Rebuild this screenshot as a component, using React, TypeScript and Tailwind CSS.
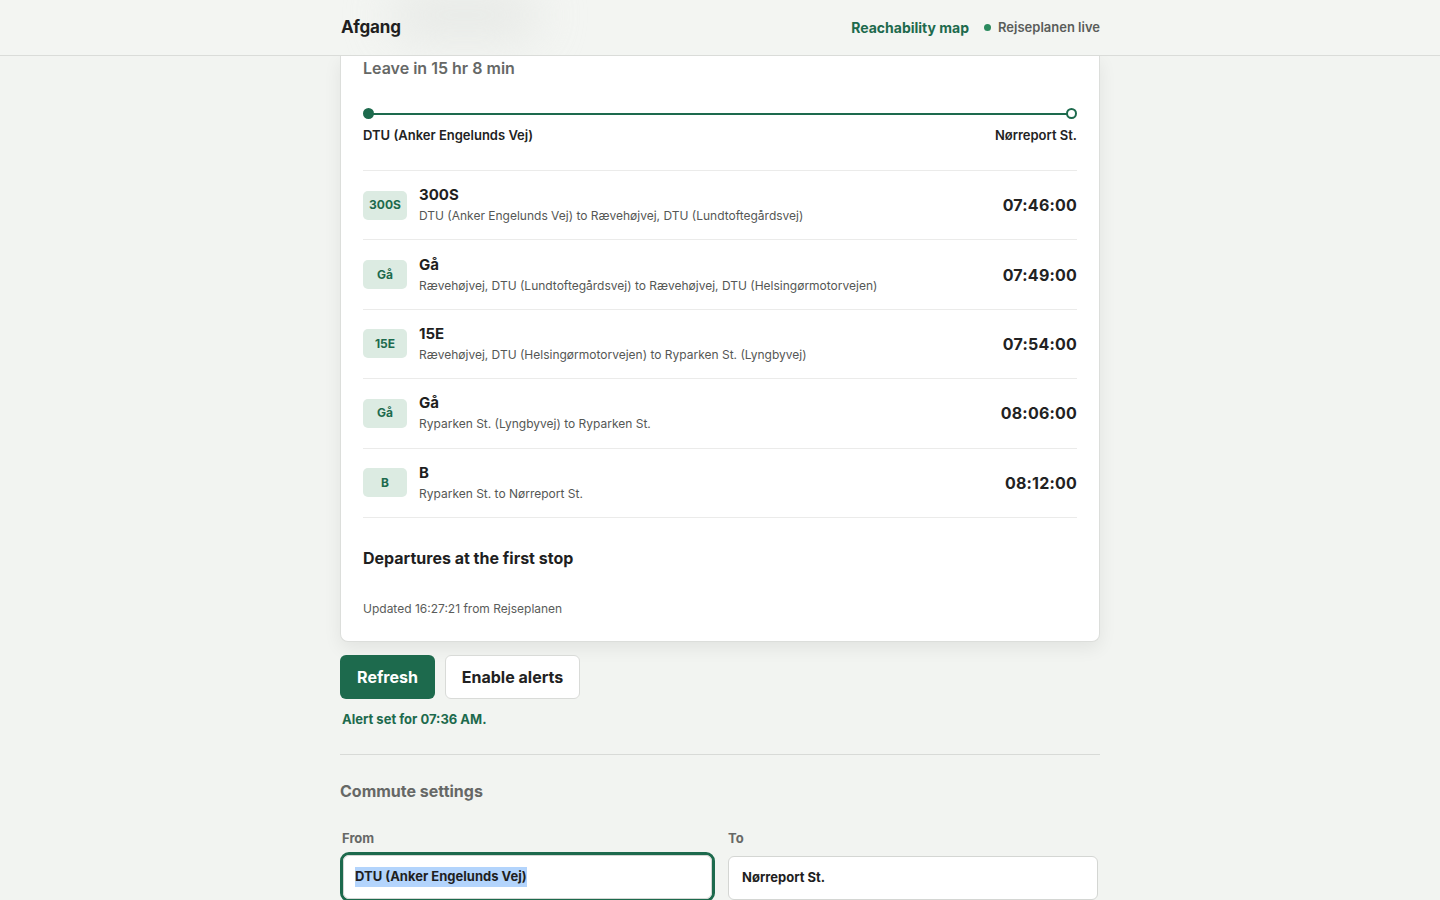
import React from "react";

const GREEN = "#1d6a4d";

const legs = [
  { badge: "300S", title: "300S", sub: "DTU (Anker Engelunds Vej) to Rævehøjvej, DTU (Lundtoftegårdsvej)", time: "07:46:00" },
  { badge: "Gå", title: "Gå", sub: "Rævehøjvej, DTU (Lundtoftegårdsvej) to Rævehøjvej, DTU (Helsingørmotorvejen)", time: "07:49:00" },
  { badge: "15E", title: "15E", sub: "Rævehøjvej, DTU (Helsingørmotorvejen) to Ryparken St. (Lyngbyvej)", time: "07:54:00" },
  { badge: "Gå", title: "Gå", sub: "Ryparken St. (Lyngbyvej) to Ryparken St.", time: "08:06:00" },
  { badge: "B", title: "B", sub: "Ryparken St. to Nørreport St.", time: "08:12:00" },
];

export default function App() {
  return (
    <div
      className="min-h-[900px] bg-[#f2f4f1] text-[#1f1f1f]"
      style={{ fontFamily: "Inter, 'Noto Sans', sans-serif" }}
    >
      <header className="relative h-[56px] border-b border-[#dadcd9] bg-[#f3f5f2] overflow-hidden">
        <div className="absolute left-[390px] top-[-10px] h-[50px] w-[150px] rounded-full bg-[#e2e4e1] blur-xl opacity-70" />
        <div className="relative mx-auto flex h-[55px] w-[760px] items-center justify-between">
          <div className="pl-[1px] text-[17px] font-bold tracking-[-0.2px] text-[#1f1f1f]">Afgang</div>
          <div className="flex items-center">
            <span className="text-[14px] font-bold text-[#1d6a4d]">Reachability map</span>
            <span className="ml-[15px] h-[7px] w-[7px] rounded-full bg-[#2a8a5e]" />
            <span className="ml-[7px] text-[13px] font-semibold text-[#5a5d5a]">Rejseplanen live</span>
          </div>
        </div>
      </header>

      <main className="mx-auto w-[760px]">
        <section className="rounded-b-[8px] border-x border-b border-[#dcdedb] bg-white px-[22px] pb-[23px] shadow-[0_6px_18px_rgba(0,0,0,0.07)]">
          <div className="text-[16px] font-semibold leading-[24px] text-[#666866]">Leave in 15 hr 8 min</div>

          <div className="relative mt-[28px] h-[11px]">
            <div className="absolute left-[5px] right-[5px] top-[4.5px] h-[2px]" style={{ background: GREEN }} />
            <div className="absolute left-0 top-0 h-[11px] w-[11px] rounded-full" style={{ background: GREEN }} />
            <div className="absolute right-0 top-0 h-[11px] w-[11px] rounded-full border-[2.5px] bg-white" style={{ borderColor: GREEN }} />
          </div>
          <div className="mt-[7px] flex justify-between text-[13px] font-semibold leading-[18px] text-[#222]">
            <span>DTU (Anker Engelunds Vej)</span>
            <span>Nørreport St.</span>
          </div>

          <div className="mt-[26px] border-t border-[#ebebea]">
            {legs.map((l, i) => (
              <div key={i} className="flex h-[69.4px] items-center border-b border-[#ebebea]">
                <div className="flex h-[29px] w-[44px] shrink-0 items-center justify-center rounded-[5px] bg-[#dcebe2] text-[12px] font-bold text-[#1d6a4d]">
                  {l.badge}
                </div>
                <div className="ml-[12px] flex-1">
                  <div className="text-[15px] font-bold leading-[20px] text-[#1f1f1f]">{l.title}</div>
                  <div className="mt-[2px] text-[12px] leading-[18px] text-[#555755]">{l.sub}</div>
                </div>
                <div className="text-[16px] font-bold tracking-[0.2px] text-[#222]">{l.time}</div>
              </div>
            ))}
          </div>

          <div className="mt-[28px] text-[16px] font-bold leading-[24px] text-[#1f1f1f]">Departures at the first stop</div>
          <div className="mt-[30px] text-[12px] leading-[18px] text-[#5a5c5a]">Updated 16:27:21 from Rejseplanen</div>
        </section>

        <div className="mt-[13px] flex gap-[10px]">
          <button className="h-[44px] w-[95px] rounded-[6px] text-[16px] font-bold text-white" style={{ background: GREEN }}>
            Refresh
          </button>
          <button className="h-[44px] w-[135px] rounded-[6px] border border-[#d9dbd8] bg-white text-[16px] font-bold text-[#222]">
            Enable alerts
          </button>
        </div>
        <div className="mt-[11px] pl-[2px] text-[13px] font-bold leading-[18px] text-[#1d6a4d]">Alert set for 07:36 AM.</div>

        <div className="mt-[26px] border-t border-[#d8dad7]" />

        <div className="mt-[24px] text-[16px] font-bold leading-[24px] text-[#666866]">Commute settings</div>

        <div className="mt-[26px] grid grid-cols-[375px_1fr] gap-x-[13px]">
          <div>
            <div className="pl-[2px] text-[13px] font-bold leading-[18px] text-[#666866]">From</div>
            <div className="mt-[5px] rounded-[9px] border-[3px] p-0" style={{ borderColor: GREEN }}>
              <div className="flex h-[44px] items-center rounded-[6px] border border-[#d4d6d3] bg-white px-[11px]">
                <span className="bg-[#b3d4fc] text-[13px] font-bold text-[#1f1f1f]">DTU (Anker Engelunds Vej)</span>
              </div>
            </div>
          </div>
          <div>
            <div className="text-[13px] font-bold leading-[18px] text-[#666866]">To</div>
            <div className="mt-[9px] flex h-[44px] w-[370px] items-center rounded-[6px] border border-[#d4d6d3] bg-white px-[13px]">
              <span className="text-[13px] font-bold text-[#1f1f1f]">Nørreport St.</span>
            </div>
          </div>
        </div>
        <div className="h-[40px]" />
      </main>
    </div>
  );
}
